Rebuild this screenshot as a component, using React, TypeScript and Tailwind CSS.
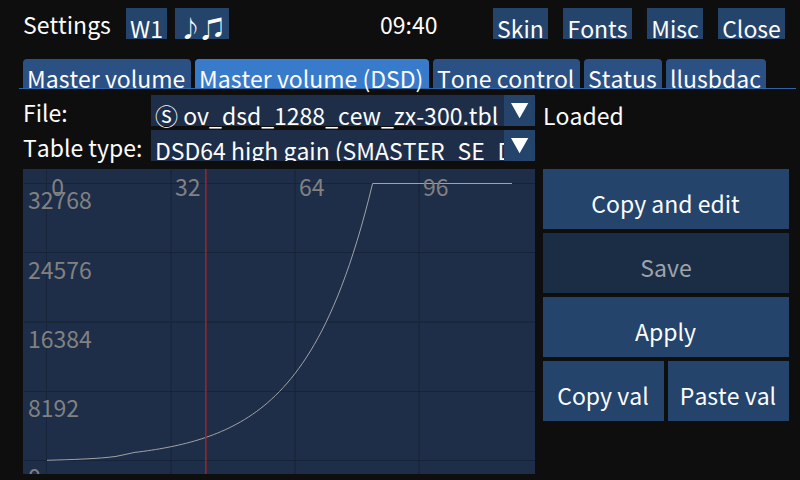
import type { ReactNode } from 'react';

const tabs = [
  { label: 'Master volume', width: 'w-[168px]' },
  { label: 'Master volume (DSD)', width: 'w-[234px]', active: true },
  { label: 'Tone control', width: 'w-[147px]' },
  { label: 'Status', width: 'w-[78px]' },
  { label: 'llusbdac', width: 'w-[100px]' },
];

const menu = [
  { label: 'Skin', width: 'w-[55px]' },
  { label: 'Fonts', width: 'w-[69px]' },
  { label: 'Misc', width: 'w-[56px]' },
  { label: 'Close', width: 'w-[67px]' },
];

const gridX = [
  { x: 23, w: 1, label: '0', tx: 28.3 },
  { x: 147, w: 2, label: '32', tx: 152 },
  { x: 271, w: 2, label: '64', tx: 276 },
  { x: 395, w: 2, label: '96', tx: 400 },
];

const gridY = [
  { y: 14, h: 1, label: '32768', ty: 40 },
  { y: 83, h: 1, label: '24576', ty: 110 },
  { y: 152, h: 2, label: '16384', ty: 179 },
  { y: 222, h: 1, label: '8192', ty: 248 },
  { y: 291, h: 1, label: '0', ty: 317 },
];

// The low end of the table is a gentle ramp, the rest is exponential until it saturates
const KNEE = 349.6;
const lowCurve = 'M24 291.3C48 290.6 76 289.8 93 287.4C100 286.2 106 284.4 113 283.1';
const highCurve = Array.from({ length: 62 }, (_, i) => {
  const x = 113 + (i * (KNEE - 113)) / 61;
  const y = 291.3 - 276.8 * Math.exp(-0.01495 * (KNEE - x));
  return `L${x.toFixed(2)} ${y.toFixed(2)}`;
}).join('');
const curve = `${lowCurve}${highCurve}H489`;

function MiniButton({ label, width, raised }: { label: string; width: string; raised?: boolean }) {
  return (
    <button
      className={`flex h-[31px] shrink-0 items-start justify-center bg-[#24446c] ${raised ? 'pt-[3px]' : 'pt-1'} ${width}`}
    >
      {label}
    </button>
  );
}

function Tab({ label, width, active }: { label: string; width: string; active?: boolean }) {
  return (
    <div className={`h-[29px] rounded-t-[4px] pt-[3px] pl-1 ${width} ${active ? 'bg-[#397bcb]' : 'bg-[#2b5083]'}`}>
      {label}
    </div>
  );
}

function Combo({ children, clipped }: { children: ReactNode; clipped?: boolean }) {
  return (
    <div className="flex h-[31px] w-[384px]">
      <div className={`w-[353px] bg-[#1e2e48] pt-1 pl-1 ${clipped ? 'overflow-hidden' : ''}`}>{children}</div>
      <div className="h-[31px] w-[31px] bg-[#24446c]">
        <svg width="31" height="31" className="block">
          <path d="M7 8H24.3L15.6 23.2Z" fill="white" />
        </svg>
      </div>
    </div>
  );
}

function ActionButton({ label, disabled }: { label: string; disabled?: boolean }) {
  return (
    <button
      className={`h-[60px] flex-1 pt-2 ${disabled ? 'bg-[#1b2d45] text-[#9da3ab]' : 'bg-[#24446c] pr-px'}`}
    >
      {label}
    </button>
  );
}

function VolumeChart() {
  return (
    <svg width="512" height="305" className="block bg-[#1e2e48]">
      {gridX.map((g) => (
        <rect key={g.x} x={g.x} y="1" width={g.w} height="304" fill={g.w === 2 ? '#1a283e' : '#17243a'} />
      ))}
      {gridY.map((g) => (
        <rect key={g.y} x="1" y={g.y} width="511" height={g.h} fill={g.h === 2 ? '#1a283e' : '#172338'} />
      ))}
      <path d={curve} fill="none" stroke="#a0a2a4" strokeWidth="1" />
      <g fill="#818182">
        {gridX.map((g) => (
          <text key={g.label} x={g.tx} y="27">{g.label}</text>
        ))}
        {gridY.map((g) => (
          <text key={g.label} x="5" y={g.ty}>{g.label}</text>
        ))}
      </g>
      <rect x="182" y="0" width="1.6" height="305" fill="#a02027" />
    </svg>
  );
}

export default function App() {
  return (
    <div className="h-[480px] w-[800px] overflow-hidden bg-[#0e0e0e] pt-2 font-['Noto_Sans_CJK_SC',sans-serif] text-[23px] leading-[33px] whitespace-nowrap text-[#fcfcfc] [font-kerning:none]">
      <header className="flex h-[31px] pr-[15px] pl-[23px]">
        <div className="w-[103px]">Settings</div>
        <div className="flex w-[254px] gap-2">
          <MiniButton label="W1" width="w-[41px]" />
          <MiniButton label="♪♫" width="w-[54px]" raised />
        </div>
        <div className="flex-1">09:40</div>
        <div className="flex gap-[15px]">
          {menu.map((m) => (
            <MiniButton key={m.label} {...m} />
          ))}
        </div>
      </header>

      <nav className="mt-5 mr-1 ml-[19px] flex h-[30px] gap-1 border-b border-[#2f63a8] pl-1">
        {tabs.map((t) => (
          <Tab key={t.label} {...t} />
        ))}
      </nav>

      <section className="mt-[6px] flex flex-col gap-1 pl-[23px]">
        <div className="flex h-[31px]">
          <div className="w-32 pt-px">File:</div>
          <Combo>Ⓢ ov_dsd_1288_cew_zx-300.tbl</Combo>
          <div className="pt-1 pl-2">Loaded</div>
        </div>
        <div className="flex h-[31px]">
          <div className="w-32 pt-px">Table type:</div>
          <Combo clipped>DSD64 high gain (SMASTER_SE_DSD64)</Combo>
        </div>
      </section>

      <main className="mt-2 flex gap-2 pl-[23px]">
        <VolumeChart />
        <div className="flex w-[246px] flex-col gap-1">
          <div className="flex"><ActionButton label="Copy and edit" /></div>
          <div className="flex"><ActionButton label="Save" disabled /></div>
          <div className="flex"><ActionButton label="Apply" /></div>
          <div className="flex gap-1">
            <ActionButton label="Copy val" />
            <ActionButton label="Paste val" />
          </div>
        </div>
      </main>
    </div>
  );
}
